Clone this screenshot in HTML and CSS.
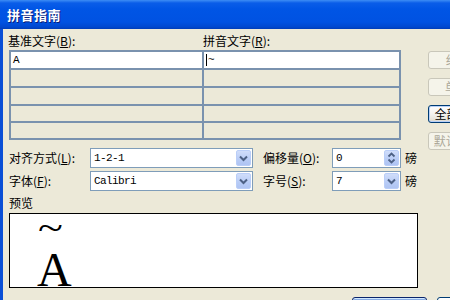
FILE: index.html
```html
<!DOCTYPE html>
<html>
<head>
<meta charset="utf-8">
<link rel="stylesheet" href="styles.css">
</head>
<body>
<div class="window">
  <div class="titlebar"><span class="title">拼音指南</span></div>
  <div class="client">
    <div class="main">
      <div class="heads">
        <span class="lbl head-left">基准文字(<u>B</u>):</span>
        <span class="lbl">拼音文字(<u>R</u>):</span>
      </div>
      <div class="grid">
        <div class="cell white"><span class="mono">A</span></div>
        <div class="cell white"><span class="caret"></span><span class="mono">~</span></div>
        <div class="cell"></div><div class="cell"></div>
        <div class="cell"></div><div class="cell"></div>
        <div class="cell"></div><div class="cell"></div>
        <div class="cell"></div><div class="cell"></div>
      </div>
      <div class="form-row first">
        <span class="lbl flabel">对齐方式(<u>L</u>):</span>
        <div class="combo wide">
          <span class="val mono">1-2-1</span>
          <span class="drop"><svg width="15" height="16" viewBox="0 0 15 16"><path d="M4 6.5 L7.5 10 L11 6.5" fill="none" stroke="#4D6185" stroke-width="2"/></svg></span>
        </div>
        <span class="lbl flabel2">偏移量(<u>O</u>):</span>
        <div class="combo narrow">
          <span class="val mono">0</span>
          <span class="drop spin"><svg width="15" height="16" viewBox="0 0 15 16"><path d="M4.5 6.5 L7.5 3.5 L10.5 6.5 M4.5 9.5 L7.5 12.5 L10.5 9.5" fill="none" stroke="#4D6185" stroke-width="1.8"/></svg></span>
        </div>
        <span class="lbl unit">磅</span>
      </div>
      <div class="form-row">
        <span class="lbl flabel">字体(<u>F</u>):</span>
        <div class="combo wide">
          <span class="val mono">Calibri</span>
          <span class="drop"><svg width="15" height="16" viewBox="0 0 15 16"><path d="M4 6.5 L7.5 10 L11 6.5" fill="none" stroke="#4D6185" stroke-width="2"/></svg></span>
        </div>
        <span class="lbl flabel2">字号(<u>S</u>):</span>
        <div class="combo narrow">
          <span class="val mono">7</span>
          <span class="drop"><svg width="15" height="16" viewBox="0 0 15 16"><path d="M4 6.5 L7.5 10 L11 6.5" fill="none" stroke="#4D6185" stroke-width="2"/></svg></span>
        </div>
        <span class="lbl unit">磅</span>
      </div>
      <div class="lbl preview-label">预览</div>
      <div class="preview">
        <div class="ruby">
          <span class="rt">~</span>
          <span class="rb">A</span>
        </div>
      </div>
    </div>
    <div class="side">
      <button class="btn disabled">组合(<u>G</u>)</button>
      <button class="btn disabled">单字(<u>M</u>)</button>
      <button class="btn focused">全部删除(<u>V</u>)</button>
      <button class="btn disabled">默认读音(<u>D</u>)</button>
    </div>
    <div class="bottom">
      <button class="btn default">确定</button>
      <button class="btn">取消</button>
    </div>
  </div>
</div>
</body>
</html>
```
FILE: styles.css
```css
* { box-sizing: border-box; }
html, body { margin: 0; padding: 0; }
body {
  width: 450px;
  height: 300px;
  overflow: hidden;
  font-family: "Noto Sans CJK SC", "Liberation Sans", sans-serif;
  font-size: 12px;
  color: #000;
  background: #ECE9D8;
}
.window { width: 450px; height: 300px; overflow: hidden; }
.titlebar {
  height: 29px;
  background: linear-gradient(#3D8DF5 0, #0A5DE8 3px, #0055E5 9px, #0052E2 22px, #0048CF 27px, #003DB8 29px);
  display: flex;
  align-items: center;
  padding-left: 7px;
}
.title {
  color: #fff;
  font-weight: bold;
  font-size: 13px;
  letter-spacing: 0.5px;
  text-shadow: 1px 1px 0 #0A1E7A;
}
.client {
  height: 271px;
  border-left: 3px solid #0A4FD6;
  padding-left: 6px;
  display: grid;
  grid-template-columns: 409px 1fr;
  column-gap: 10px;
  align-items: start;
  overflow: hidden;
}
.lbl { line-height: 12px; white-space: nowrap; }
u { text-decoration: underline; text-underline-offset: 1px; }
.mono {
  font-family: "Liberation Mono", monospace;
  font-size: 11px;
  letter-spacing: -0.6px;
}
.main { padding-top: 6px; }
.heads { display: flex; height: 12px; margin-left: -1px; }
.head-left { width: 195px; }
.grid {
  margin-top: 3px;
  width: 392px;
  height: 90px;
  border: 1px solid #7A92AE;
  display: grid;
  grid-template-columns: 193px 197px;
  grid-template-rows: 18px 18px 18px 17px 17px;
}
.cell {
  border: 1px solid #7A92AE;
  display: flex;
  align-items: center;
  padding-left: 2px;
}
.cell.white { background: #fff; }
.caret {
  display: inline-block;
  width: 1px;
  height: 12px;
  background: #000;
  margin-right: 1px;
}
.form-row {
  display: flex;
  align-items: center;
  height: 20px;
  margin-top: 3px;
}
.form-row.first { margin-top: 8px; }
.flabel { width: 81px; }
.flabel2 { width: 69px; margin-left: 10px; }
.unit { margin-left: 4px; }
.combo {
  height: 20px;
  border: 1px solid #7F9DB9;
  background: #fff;
  display: flex;
  align-items: center;
  padding: 1px;
}
.combo.wide { width: 163px; }
.combo.narrow { width: 69px; }
.val { flex: 1; padding-left: 2px; line-height: 16px; }
.drop {
  width: 15px;
  height: 16px;
  border-radius: 2px;
  background: linear-gradient(#D0DDFA, #B8CCF6 60%, #AFC4F3);
  border: 1px solid #BACEF8;
  display: flex;
  align-items: center;
  justify-content: center;
}
.drop svg { display: block; flex: none; }
.preview-label { margin-top: 6px; }
.preview {
  margin-top: 4px;
  width: 409px;
  height: 75px;
  border: 1px solid #000;
  background: #fff;
  overflow: hidden;
  padding: 4px 0 0 27px;
}
.ruby {
  display: flex;
  flex-direction: column;
  align-items: flex-start;
  font-family: "Liberation Serif", serif;
}
.rt { font-size: 46px; line-height: 20px; height: 20px; margin-left: 1px; transform: scaleY(0.8); }
.rb { font-size: 48px; line-height: 64px; height: 64px; }
.side {
  padding-top: 22px;
  display: flex;
  flex-direction: column;
  gap: 9px;
}
.btn {
  width: 76px;
  height: 18px;
  padding: 0;
  font-family: "Noto Sans CJK SC", "Liberation Sans", sans-serif;
  font-size: 12px;
  line-height: 14px;
  color: #000;
  border: 1px solid #003C74;
  border-radius: 3px;
  background: linear-gradient(#FFFFFF, #F3F2EE 50%, #E6E3DA 85%, #D6D0C5);
  text-align: center;
  white-space: nowrap;
  flex: none;
}
.btn.disabled {
  color: #ACA899;
  border-color: #C9C7BA;
  background: #F5F4EA;
}
.btn.focused {
  box-shadow: inset 0 0 0 1px #B9D1F7;
}
.bottom {
  grid-column: 1 / 3;
  margin-top: 9px;
  padding-left: 343px;
  display: flex;
  gap: 10px;
}
.bottom .btn { width: 75px; height: 23px; }
.bottom .btn.default {
  border-color: #0A246A;
  box-shadow: inset 0 1px 0 #CEE7FF, inset 0 0 0 2px #89ADE4;
}
```
